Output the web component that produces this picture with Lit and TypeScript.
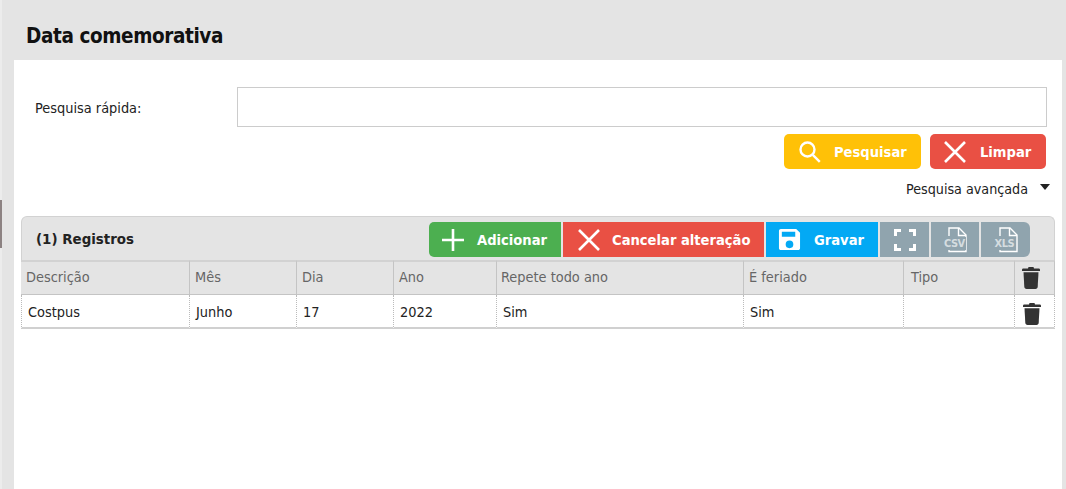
import { LitElement, html, css, svg } from "lit";
import { customElement } from "lit/decorators.js";

const trash = svg`<svg class="trash" viewBox="0 0 18 22" width="18" height="22"><path d="M6.500 0h5l.5 1.500h4.500c.8 0 1.500.5 1.500 1.200v1.300H0V2.700c0-.7.7-1.200 1.500-1.200H6z" fill="#333"/><path d="M1.500 5.200h15l-.8 14.600c-.1 1.300-.9 2.200-2.200 2.200h-9c-1.300 0-2.100-.9-2.200-2.200z" fill="#333"/></svg>`;

const xIcon = svg`<svg viewBox="0 0 24 24" width="24" height="24" fill="none" stroke="#fff" stroke-width="2.600"><path d="M2 2l20 20M22 2L2 22"/></svg>`;

const fileIcon = (label: string) => html`<span class="file"><svg viewBox="0 0 24 26" width="24" height="26" fill="none" stroke="#fff" stroke-width="1.400"><path d="M6 9V1h10l7 7v16.500H6v-2"/><path d="M15.500 1v7.500H23" /></svg><span class="file-label">${label}</span></span>`;

const rows = ["Descrição","Mês","Dia","Ano","Repete todo ano","É feriado","Tipo"];
const cells = ["Costpus","Junho","17","2022","Sim","Sim",""];
const widths = [169,107,97,103,247,160,111,40];

@customElement("app-root")
export class AppRoot extends LitElement {
  static styles = css`
    :host { display:block; width:1066px; height:489px; overflow:hidden; background:#e4e4e4; font-family:"DejaVu Sans",sans-serif; font-stretch:condensed; color:#222; position:relative; }
    .page { display:flex; flex-direction:column; height:489px; padding-left:12px; padding-right:4px; box-sizing:border-box; border-left:2px solid #ececec; }
    .scrap { position:absolute; left:0; top:200px; width:2px; height:48px; background:#8c8282; }
    h1 { margin:0; height:60px; box-sizing:border-box; padding:22px 0 0 12px; font:bold 20.500px/28px "DejaVu Sans",sans-serif; font-stretch:condensed; letter-spacing:-.4px; color:#111; }
    .panel { flex:1; background:#fff; padding:27px 0 0 7px; }
    .search { display:grid; grid-template-columns:216px 810px; height:40px; align-items:center; }
    .search label { padding:2px 0 0 14px; font-size:14.400px; }
    .search input { width:810px; height:40px; box-sizing:border-box; border:1px solid #ccc; background:#fff; margin:0; padding:0; }
    .actions { display:flex; justify-content:flex-end; gap:9px; margin:7px 0 0; padding-right:16px; }
    .btn { display:flex; align-items:center; height:35px; border-radius:5px; color:#fff; font-weight:bold; font-size:14.600px; box-sizing:border-box; }
    .yellow { background:#ffc107; width:137px; padding-left:14px; gap:12px; }
    .red { background:#e95044; }
    .limpar { width:116px; padding-left:13px; gap:13px; }
    .adv { display:flex; justify-content:flex-end; align-items:center; gap:12px; font-size:14.200px; height:20px; margin-top:10px; padding-right:12px; }
    .caret { width:0; height:0; border:5px solid transparent; border-top:6px solid #222; border-bottom:0; margin-top:-5px; }
    .grid-wrap { margin-top:17px; width:1034px; }
    .toolbar { display:flex; align-items:flex-start; height:44px; box-sizing:border-box; border:1px solid #d2d2d2; border-bottom:0; border-radius:6px 6px 0 0; background:#e4e4e4; padding:5px 0 0 14px; }
    .toolbar b { font-size:14.900px; width:393px; color:#222; line-height:34px; }
    .tools { display:flex; gap:2px; }
    .tools .btn { border-radius:0; }
    .tools .add { background:#4caf50; width:132px; padding-left:12px; gap:12px; border-radius:5px 0 0 5px; }
    .cancel { width:201px; padding-left:14px; gap:11px; }
    .save { background:#03a9f4; width:112px; padding-left:12px; gap:13px; }
    .gray { background:#90a4ae; width:49px; justify-content:center; }
    .mid { width:48px; }
    .tools .last { border-radius:0 6px 6px 0; }
    .file { position:relative; display:block; width:28px; height:26px; }
    .file svg { position:absolute; left:2px; top:0; }
    .file-label { position:absolute; left:3px; top:10px; font-size:11px; line-height:13px; font-weight:bold; letter-spacing:-.5px; color:#d5dde0; background:#90a4ae; padding:0 1px 0 0; }
    table { border-collapse:separate; border-spacing:0; width:1034px; table-layout:fixed; font-size:14.400px; }
    th { background:#e4e4e4; font-weight:normal; color:#666; text-align:left; height:35px; padding:0 0 2px 5px; border-right:1px solid #c4c4c4; border-bottom:1px solid #c4c4c4; border-top:2px solid #d2d2d2; box-sizing:border-box; }
    th:nth-child(5) { padding-left:4px; }
    th:nth-child(7) { padding-left:7px; }
    td { height:34px; padding:1px 0 0 6px; border-right:1px dotted #bbb; border-bottom:2px solid #d0d0d0; box-sizing:border-box; color:#222; }
    td:first-child { border-left:1px dotted #bbb; padding-left:6px; }
    th:last-child, td:last-child { padding:0; }
    th:last-child .trash { margin:0 0 0 7px; }
    td:last-child .trash { margin:6px 0 0 8px; }
    .trash { display:block; }
  `;
  render() {
    return html`<div class="scrap"></div><div class="page">
      <h1>Data comemorativa</h1>
      <div class="panel">
        <div class="search"><label>Pesquisa rápida:</label><input type="text" /></div>
        <div class="actions">
          <div class="btn yellow"><svg viewBox="0 0 24 24" width="24" height="24" fill="none" stroke="#fff" stroke-width="2.400"><circle cx="9.500" cy="9.500" r="7"/><path d="M14.800 14.800l7 7"/></svg>Pesquisar</div>
          <div class="btn red limpar">${xIcon}Limpar</div>
        </div>
        <div class="adv">Pesquisa avançada<span class="caret"></span></div>
        <div class="grid-wrap">
          <div class="toolbar"><b>(1) Registros</b>
            <div class="tools">
              <div class="btn add"><svg viewBox="0 0 24 24" width="24" height="24" stroke="#fff" stroke-width="2.600"><path d="M12 1v22M1 12h22"/></svg>Adicionar</div>
              <div class="btn red cancel">${xIcon}Cancelar alteração</div>
              <div class="btn save"><svg viewBox="0 0 24 24" width="23" height="23"><path fill="#fff" fill-rule="evenodd" d="M3 1h16l4 4v16c0 1.100-.9 2-2 2H3c-1.100 0-2-.9-2-2V3c0-1.100.9-2 2-2zm1 3v5h14V4zm8 9a4 4 0 100 8 4 4 0 000-8z"/></svg>Gravar</div>
              <div class="btn gray"><svg viewBox="0 0 22 22" width="22" height="22" fill="none" stroke="#fff" stroke-width="3"><path d="M1.500 7V1.500H7M15 1.500h5.500V7M20.500 15v5.500H15M7 20.500H1.500V15"/></svg></div>
              <div class="btn gray mid">${fileIcon("CSV")}</div>
              <div class="btn gray last">${fileIcon("XLS")}</div>
            </div>
          </div>
          <table>
            <colgroup>${widths.map(w=>html`<col style="width:${w}px"/>`)}</colgroup>
            <thead><tr>${rows.map(r=>html`<th>${r}</th>`)}<th>${trash}</th></tr></thead>
            <tbody><tr>${cells.map(c=>html`<td>${c}</td>`)}<td>${trash}</td></tr></tbody>
          </table>
        </div>
      </div>
    </div>`;
  }
}
